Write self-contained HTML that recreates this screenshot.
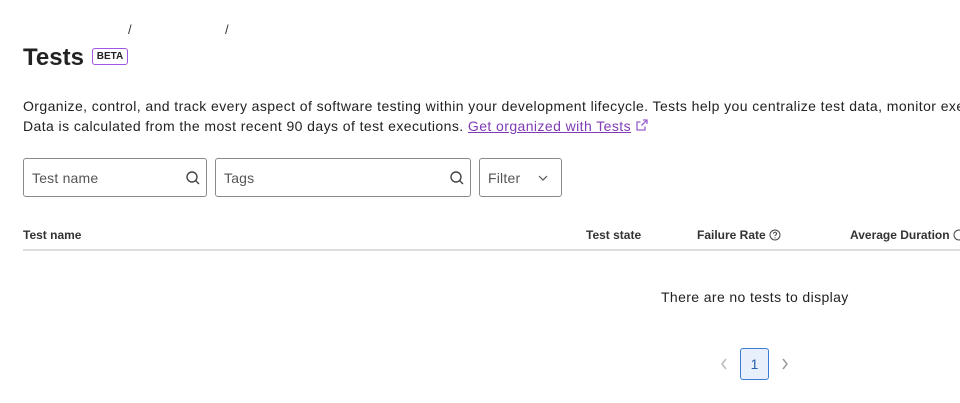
<!DOCTYPE html>
<html><head><meta charset="utf-8"><style>
body{margin:0;width:960px;height:403px;overflow:hidden;background:#fff;font-family:"Liberation Sans",sans-serif;color:#222;position:relative}
.a{position:absolute;white-space:nowrap}
.inp{position:absolute;top:158px;height:37px;border:1px solid #8a8a8e;border-radius:3px;box-sizing:content-box}
.inp span{position:absolute;left:8px;top:11px;font-size:14px;color:#555;letter-spacing:0.2px}
.th{position:absolute;top:228px;font-size:12px;font-weight:bold;color:#333;white-space:nowrap}
</style></head><body>
<div class="a" style="left:128px;top:22px;font-size:13px;color:#333">/</div>
<div class="a" style="left:225px;top:22px;font-size:13px;color:#333">/</div>
<div class="a" style="left:23px;top:44px;font-size:24px;font-weight:bold;color:#222;letter-spacing:0px">Tests</div>
<div class="a" style="left:92px;top:48px;width:34px;height:15px;border:1px solid #a355e6;border-radius:3px;font-size:10px;font-weight:bold;text-align:center;line-height:15px;color:#222">BETA</div>
<div class="a" style="left:23px;top:96px;font-size:14px;line-height:20px;color:#222;width:937px;overflow:hidden;letter-spacing:0.42px">Organize, control, and track every aspect of software testing within your development lifecycle. Tests help you centralize test data, monitor execution<br>Data is calculated from the most recent 90 days of test executions. <span style="color:#7e3bb5;text-decoration:underline">Get organized with Tests</span> <svg width="14" height="14" viewBox="0 0 14 14" style="vertical-align:-1px"><path d="M8 2h4v4M12 2L6.5 7.5M10 8.5V12H2V4h3.5" fill="none" stroke="#9b5fd0" stroke-width="1.3"/></svg></div>
<div class="inp" style="left:23px;width:182px"><span>Test name</span><svg style="position:absolute;right:5px;top:11px" width="16" height="16" viewBox="0 0 16 16"><circle cx="7" cy="7" r="5" fill="none" stroke="#444" stroke-width="1.4"/><path d="M10.5 10.5L14 14" stroke="#444" stroke-width="1.4"/></svg></div>
<div class="inp" style="left:215px;width:254px"><span>Tags</span><svg style="position:absolute;right:5px;top:11px" width="16" height="16" viewBox="0 0 16 16"><circle cx="7" cy="7" r="5" fill="none" stroke="#444" stroke-width="1.4"/><path d="M10.5 10.5L14 14" stroke="#444" stroke-width="1.4"/></svg></div>
<div class="inp" style="left:479px;width:81px"><span>Filter</span><svg style="position:absolute;left:58px;top:15px" width="10" height="8" viewBox="0 0 10 8"><path d="M1 2l4 4 4-4" fill="none" stroke="#555" stroke-width="1.2"/></svg></div>
<div class="th" style="left:23px">Test name</div>
<div class="th" style="left:586px">Test state</div>
<div class="th" style="left:697px">Failure Rate <svg width="12" height="12" viewBox="0 0 12 12" style="vertical-align:-2px"><circle cx="6" cy="6" r="5" fill="none" stroke="#444" stroke-width="1"/><path d="M4.5 4.7a1.5 1.5 0 1 1 2 1.4c-.4.2-.5.5-.5.9" fill="none" stroke="#444" stroke-width="1"/><circle cx="6" cy="8.8" r=".6" fill="#444"/></svg></div>
<div class="th" style="left:850px">Average Duration <svg width="12" height="12" viewBox="0 0 12 12" style="vertical-align:-2px"><circle cx="6" cy="6" r="5" fill="none" stroke="#444" stroke-width="1"/></svg></div>
<div class="a" style="left:23px;top:249px;width:937px;height:2px;background:#ddd"></div>
<div class="a" style="left:661px;top:289px;font-size:14px;color:#222;letter-spacing:0.38px">There are no tests to display</div>
<svg class="a" style="left:719px;top:357px" width="10" height="14" viewBox="0 0 10 14"><path d="M7 2L3 7l4 5" fill="none" stroke="#bbb" stroke-width="1.5"/></svg>
<div class="a" style="left:740px;top:348px;width:27px;height:30px;border:1px solid #3a7bd5;border-radius:3px;background:#e8f0fc;color:#2a5fb0;font-size:14px;text-align:center;line-height:30px">1</div>
<svg class="a" style="left:780px;top:357px" width="10" height="14" viewBox="0 0 10 14"><path d="M3 2l4 5-4 5" fill="none" stroke="#999" stroke-width="1.5"/></svg>
</body></html>
